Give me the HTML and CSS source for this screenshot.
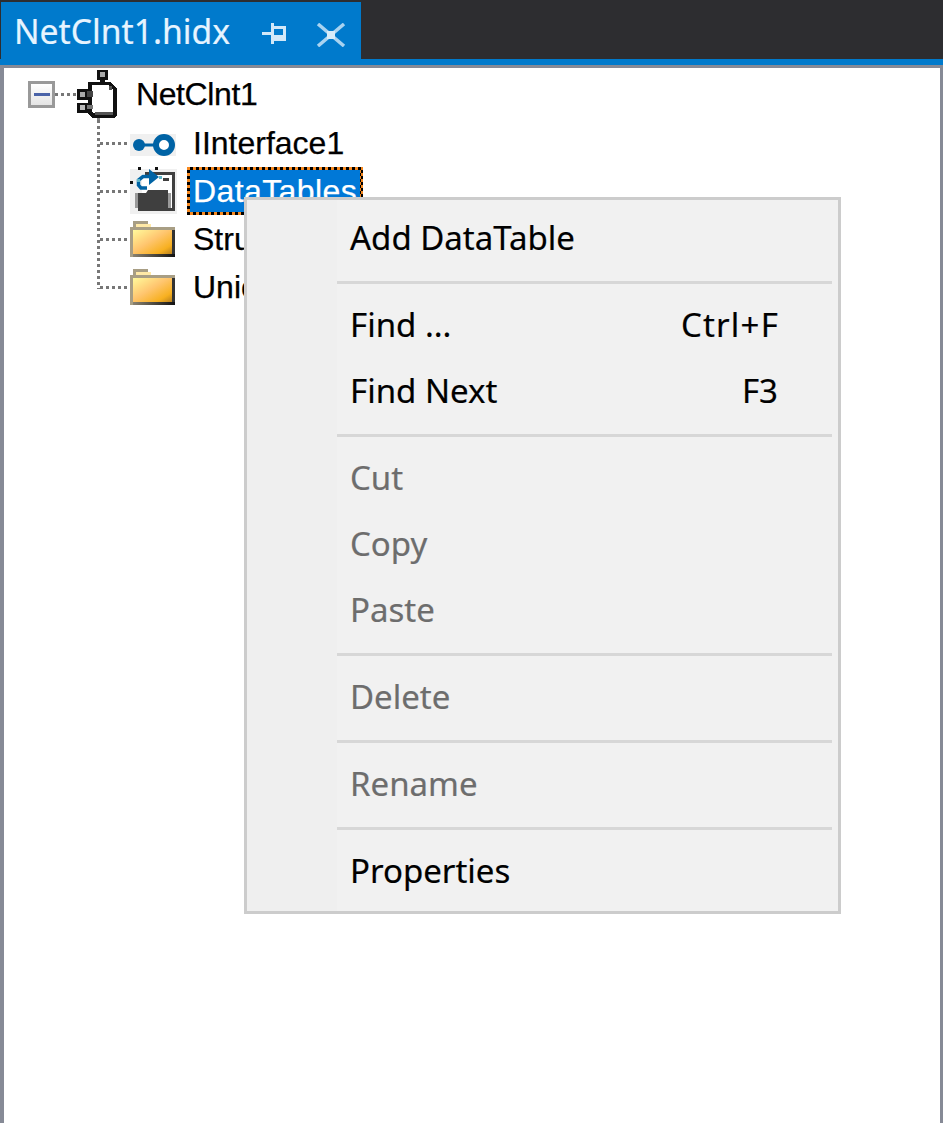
FILE: index.html
```html
<!DOCTYPE html>
<html lang="en">
<head>
<meta charset="UTF-8">
<title>NetClnt1.hidx</title>
<link rel="stylesheet" href="styles.css">
</head>
<body>

<div class="tabbar">
    <div class="tab">
        <span class="tab-title">NetClnt1.hidx</span>
        <svg class="tab-pin" width="24" height="21" viewBox="0 0 24 21">
            <path fill="#d2e8f8" fill-rule="evenodd" d="M0 9h9V0h3v3h12v15H12v3H9v-9H0zM12 6v6h9V6z"/>
        </svg>
        <svg class="tab-close" width="30" height="24" viewBox="0 0 30 24">
            <path fill="none" stroke="#a9d3f0" stroke-width="3.500" d="M2 1l26 22M28 1L2 23"/>
            <rect x="11" y="8" width="8" height="8" fill="#d8ecf9"/>
        </svg>
    </div>
</div>
<div class="accent"></div>

<div class="panel">
    <div class="tree">
        <div class="node node-root">
            <span class="expander"><span class="expander-minus"></span></span>
            <span class="stub stub-root"></span>
            <svg class="icon-root" width="46" height="56" viewBox="0 0 46 56" shape-rendering="crispEdges">
                <rect x="24" y="4" width="11" height="10" fill="#111"/>
                <rect x="27" y="6" width="5" height="5" fill="#aaa"/>
                <rect x="27" y="14" width="5" height="3" fill="#111"/>
                <path fill="#111" d="M15 16h22l7 6v28l-3 2H19l-4-4z"/>
                <path fill="#fff" d="M19 19h17l4 5v22l-20 1-1-1z"/>
                <path fill="#555" d="M36 20h3v4h-3zM22 46h18v3H22z"/>
                <rect x="4" y="23" width="11" height="11" fill="#111"/>
                <rect x="7" y="26" width="5" height="5" fill="#aaa"/>
                <rect x="14" y="25" width="6" height="6" fill="#444"/>
                <rect x="4" y="37" width="11" height="10" fill="#111"/>
                <rect x="7" y="39" width="5" height="5" fill="#bbb"/>
                <rect x="14" y="39" width="6" height="4" fill="#777"/>
                <rect x="24" y="52" width="3" height="3" fill="#888"/>
            </svg>
            <span class="label label-root">NetClnt1</span>
        </div>
        <div class="children">
            <div class="node">
                <span class="stub"></span>
                <svg class="icon icon-iface" width="46" height="22" viewBox="0 0 46 22">
                    <rect width="46" height="22" fill="#f0f0f0"/>
                    <rect x="8" y="9.500" width="20" height="3" fill="#0063a5"/>
                    <circle cx="9" cy="11" r="6" fill="#0063a5"/>
                    <circle cx="34" cy="11" r="8" fill="#fff" stroke="#0063a5" stroke-width="6"/>
                </svg>
                <span class="label">IInterface1</span>
            </div>
            <div class="node">
                <span class="stub"></span>
                <svg class="icon" width="48" height="48" viewBox="0 0 48 48">
                    <rect x="0" y="2" width="47" height="45" fill="#f0f0f0"/>
                    <rect x="12" y="7" width="30" height="36" fill="#fff"/>
                    <path fill="#3f3f3f" d="M15 5h30v39H8v-3h34V8H15z"/>
                    <rect x="33" y="11" width="6" height="3" fill="#3f3f3f"/>
                    <path fill="#3f3f3f" d="M18 23h20v21H8v-18h8z"/>
                    <path fill="#999" d="M38 26h3v15h-3zM5 26h3v15H5z"/>
                    <path fill="#111" d="M8 0h3v3H8zM25 0h3v3h-3zM0 14h3v3H0z"/>
                    <path fill="none" stroke="#0063a5" stroke-width="3.500" d="M17 21H11L8.500 18V13L13 9.500H22"/>
                    <path fill="#0063a5" d="M19 2l10 8-10 8z"/>
                    <path fill="#5fb6c8" d="M29 9h3v3h-3zM7 12h3v3H7z"/>
                </svg>
                <span class="label label-selected">DataTables</span>
            </div>
            <div class="node">
                <span class="stub"></span>
                <svg class="icon" width="46" height="36" viewBox="0 0 46 36" shape-rendering="crispEdges">
                    <defs>
                        <linearGradient id="folderFill" x1="0" y1="0" x2="1" y2="1">
                            <stop offset="0" stop-color="#fffa9c"/>
                            <stop offset="0.45" stop-color="#ffc670"/>
                            <stop offset="0.8" stop-color="#f7b020"/>
                            <stop offset="1" stop-color="#b8801c"/>
                        </linearGradient>
                        <linearGradient id="folderEdge">
                            <stop offset="0" stop-color="#8a8270"/>
                            <stop offset="1" stop-color="#111"/>
                        </linearGradient>
                    </defs>
                    <path fill="#a89e84" d="M3 0h15v3H3zM0 6h3V3h3v3h39v3H3v27H0z"/>
                    <rect x="6" y="3" width="15" height="3" fill="#ffe9a6"/>
                    <rect x="3" y="9" width="39" height="24" fill="url(#folderFill)"/>
                    <rect x="3" y="33" width="42" height="3" fill="url(#folderEdge)"/>
                    <rect x="42" y="9" width="3" height="24" fill="#333"/>
                </svg>
                <span class="label">Structs</span>
            </div>
            <div class="node">
                <span class="stub"></span>
                <svg class="icon" width="46" height="36" viewBox="0 0 46 36" shape-rendering="crispEdges">
                    <path fill="#a89e84" d="M3 0h15v3H3zM0 6h3V3h3v3h39v3H3v27H0z"/>
                    <rect x="6" y="3" width="15" height="3" fill="#ffe9a6"/>
                    <rect x="3" y="9" width="39" height="24" fill="url(#folderFill)"/>
                    <rect x="3" y="33" width="42" height="3" fill="url(#folderEdge)"/>
                    <rect x="42" y="9" width="3" height="24" fill="#333"/>
                </svg>
                <span class="label">Unions</span>
            </div>
        </div>
    </div>
</div>

<div class="menu">
    <div class="menu-item">Add DataTable</div>
    <div class="menu-sep"></div>
    <div class="menu-item"><span>Find ...</span><span class="shortcut">Ctrl+F</span></div>
    <div class="menu-item"><span>Find Next</span><span>F3</span></div>
    <div class="menu-sep"></div>
    <div class="menu-item disabled">Cut</div>
    <div class="menu-item disabled">Copy</div>
    <div class="menu-item disabled">Paste</div>
    <div class="menu-sep"></div>
    <div class="menu-item disabled">Delete</div>
    <div class="menu-sep"></div>
    <div class="menu-item disabled">Rename</div>
    <div class="menu-sep"></div>
    <div class="menu-item">Properties</div>
</div>

</body>
</html>
```
FILE: styles.css
```css
html, body {
    height: 100%;
}

body {
    display: flex;
    flex-direction: column;
    margin: 0;
    background-color: #fff;
    overflow: hidden;
}

.tabbar {
    height: 57px;
    padding: 2px 0 0 1px;
    background-color: #2d2d30;
}

.tab {
    display: flex;
    align-items: center;
    box-sizing: border-box;
    width: 360px;
    height: 57px;
    padding-left: 13px;
    background-color: #007acc;
}

.tab-title {
    width: 248px;
    font-family: "Noto Sans", sans-serif;
    font-size: 33.700px;
    color: #e6f4ff;
    -webkit-text-stroke: 0.2px #e6f4ff;
}

.tab-pin {
    margin-top: 6px;
}

.tab-close {
    margin: 9px 0 0 30px;
}

.accent {
    height: 6px;
    background-color: #007acc;
}

.panel {
    flex: 1;
    border: solid #868a96;
    border-width: 3px 3px 0 4px;
    background-color: #fff;
}

.tree {
    padding: 2px 0 0 24px;
    font-family: "Liberation Sans", sans-serif;
    font-size: 32px;
    color: #000;
    -webkit-text-stroke: 0.25px #000;
}

.node {
    display: flex;
    align-items: center;
    height: 48px;
}

.expander {
    display: flex;
    align-items: center;
    justify-content: center;
    box-sizing: border-box;
    width: 27px;
    height: 27px;
    border: 3px solid #999;
    background: linear-gradient(#fff, #e4e4e4);
}

.expander-minus {
    width: 16px;
    height: 3px;
    background-color: #4a63a8;
}

.stub {
    width: 30px;
    height: 3px;
    background: repeating-linear-gradient(90deg, #777 0 3px, transparent 3px 6px);
}

.stub-root {
    width: 21px;
}

.icon-root {
    flex: none;
    margin-left: -3px;
}

.icon-iface {
    margin-top: 3px;
}

.label {
    margin-left: 17px;
    white-space: nowrap;
}

.label-root {
    letter-spacing: -0.400px;
}

.label-selected {
    box-sizing: border-box;
    width: 176px;
    height: 48px;
    margin-left: 9px;
    padding: 0 3px;
    line-height: 42px;
    letter-spacing: 0.400px;
    border: 3px solid transparent;
    color: #fff;
    -webkit-text-stroke: 0.25px #fff;
    background:
        linear-gradient(#0078d7, #0078d7) padding-box,
        repeating-conic-gradient(#000 0 25%, #f7891f 0 50%) 0 0 / 6px 6px border-box;
}

.children {
    position: relative;
    padding: 1px 0 0 72px;
}

/* linha pontilhada vertical da arvore */
.children::before {
    content: "";
    position: absolute;
    left: 69px;
    top: 2px;
    bottom: 22px;
    width: 3px;
    background: repeating-linear-gradient(180deg, #777 0 3px, transparent 3px 6px);
}

.menu {
    position: absolute;
    left: 244px;
    top: 197px;
    box-sizing: border-box;
    width: 597px;
    height: 717px;
    padding-top: 6px;
    border: 3px solid #ccc;
    background: linear-gradient(90deg, #efefef 90px, #f1f1f1 90px);
    font-family: "Noto Sans", sans-serif;
    font-size: 33px;
    color: #000;
    -webkit-text-stroke: 0.2px #000;
}

.menu-item {
    display: flex;
    align-items: center;
    justify-content: space-between;
    box-sizing: border-box;
    height: 66px;
    padding: 0 60px 3px 103px;
}

.shortcut {
    margin-right: -1px;
    letter-spacing: 1.200px;
}

.menu-item.disabled {
    color: #6d6d6d;
    -webkit-text-stroke: 0.2px #6d6d6d;
}

.menu-sep {
    height: 3px;
    margin: 9px 6px 9px 90px;
    background-color: #d7d7d7;
}
```
